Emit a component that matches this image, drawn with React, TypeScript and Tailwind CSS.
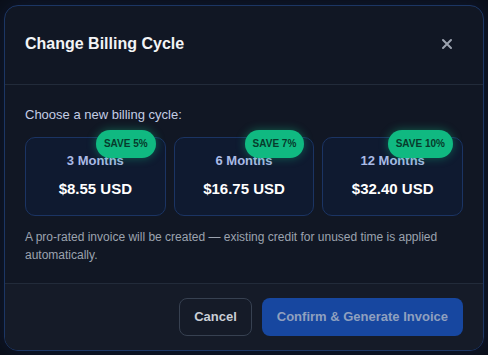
import { useState } from "react";

interface Cycle {
  months: number;
  price: string;
  save: string;
}

const cycles: Cycle[] = [
  { months: 3, price: "$8.55 USD", save: "SAVE 5%" },
  { months: 6, price: "$16.75 USD", save: "SAVE 7%" },
  { months: 12, price: "$32.40 USD", save: "SAVE 10%" },
];

export default function App() {
  const [selected, setSelected] = useState<number | null>(null);

  return (
    <div
      className="flex h-screen w-full items-center justify-center bg-[#0a0e17]"
      style={{ fontFamily: '"Liberation Sans", Arial, sans-serif' }}
    >
      <div className="w-[480px] overflow-hidden rounded-[14px] border border-[#1c3664] bg-[#111724] shadow-[0_0_24px_rgba(30,64,140,0.25)]">
        {/* Header */}
        <div className="flex items-center border-b border-[#222b3a] pl-5 pr-5 pt-[26px] pb-[28px]">
          <h3 className="text-base font-bold leading-6 text-[#f3f4f6]">Change Billing Cycle</h3>
          <button className="ml-auto mr-1 flex h-6 w-6 items-center justify-center text-[#9ca3af]">
            <svg className="h-4 w-4" viewBox="0 0 24 24" fill="none" stroke="currentColor" strokeWidth={3} strokeLinecap="round">
              <path d="M6 6l12 12M18 6L6 18" />
            </svg>
          </button>
        </div>

        {/* Body */}
        <div className="px-5 pt-5 pb-[19px]">
          <p className="mb-3 text-[13px] leading-5 text-[#c3cde4]">Choose a new billing cycle:</p>
          <div className="grid grid-cols-3 gap-2">
            {cycles.map((c) => (
              <button
                key={c.months}
                onClick={() => setSelected(c.months)}
                className={`relative rounded-[10px] border bg-[#0f1a30] pt-[13px] pb-4 text-center ${
                  selected === c.months ? "border-[#3b6fd8]" : "border-[#1b3463]"
                }`}
              >
                <span className="absolute -top-2 right-[9px] rounded-full bg-[#10b981] px-2 py-[7px] text-[10px] font-bold leading-[14px] text-[#073b2c] shadow-[0_0_10px_rgba(16,185,129,0.45)]">
                  {c.save}
                </span>
                <p className="text-[13px] font-bold leading-5 text-[#aabbe6]">{c.months} Months</p>
                <p className="mt-2 text-[15px] font-bold leading-5 text-white">{c.price}</p>
              </button>
            ))}
          </div>
          <p className="mt-3 text-xs leading-[18px] text-[#9ca3af]">
            A pro-rated invoice will be created — existing credit for unused time is applied automatically.
          </p>
        </div>

        {/* Footer */}
        <div className="flex justify-end gap-[10px] border-t border-[#222b3a] bg-[#151b28] px-5 py-[14px]">
          <button className="rounded-lg border border-[#374151] px-[14px] py-2 text-[13px] font-bold leading-5 text-[#c9ced6]">
            Cancel
          </button>
          <button
            disabled={selected === null}
            className="rounded-lg border border-transparent bg-[#1747a0] px-[14px] py-2 text-[13px] font-bold leading-5 text-[#8fa0bf]"
          >
            Confirm &amp; Generate Invoice
          </button>
        </div>
      </div>
    </div>
  );
}
